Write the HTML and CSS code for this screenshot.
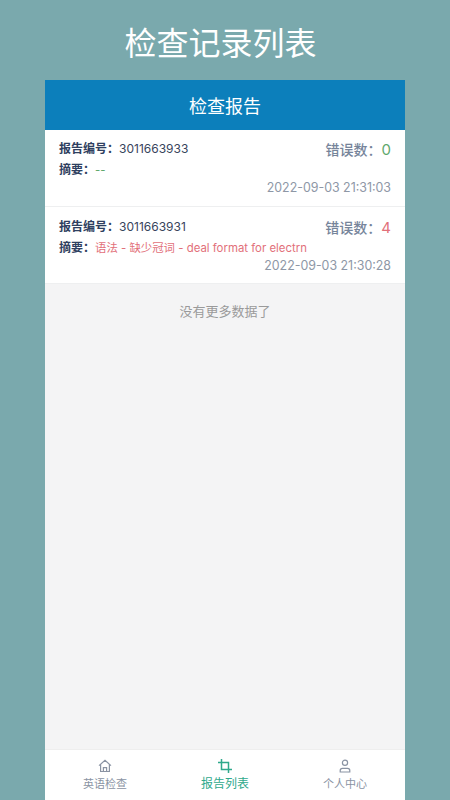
FILE: index.html
```html
<!DOCTYPE html>
<html lang="zh-CN">
<head>
  <meta charset="UTF-8">
  <meta name="viewport" content="width=device-width, initial-scale=1.0">
  <title>检查记录列表</title>
  <link rel="stylesheet" href="styles.css">
</head>
<body>

<h1 class="page-title">检查记录列表</h1>

<div class="phone">
  <header class="nav-bar">检查报告</header>

  <div class="content">
    <div class="report">
      <div class="report-top">
        <div class="report-no"><span class="label">报告编号：</span>3011663933</div>
        <div class="errors">错误数：<span class="count ok">0</span></div>
      </div>
      <div class="summary"><span class="label">摘要：</span><span class="ok">--</span></div>
      <div class="time">2022-09-03 21:31:03</div>
    </div>

    <div class="report">
      <div class="report-top">
        <div class="report-no"><span class="label">报告编号：</span>3011663931</div>
        <div class="errors">错误数：<span class="count bad">4</span></div>
      </div>
      <div class="summary"><span class="label">摘要：</span><span class="bad">语法 - 缺少冠词 - deal format for electrn</span></div>
      <div class="time">2022-09-03 21:30:28</div>
    </div>

    <p class="no-more">没有更多数据了</p>
  </div>

  <nav class="tabbar">
    <div class="tab">
      <svg viewBox="0 0 16 16" width="16" height="16" fill="none" stroke="currentColor" stroke-width="1.2"><path d="M2 7.6 8 2.4l6 5.2M3.6 6.6v6.9h8.8V6.6M6.4 13.5V9.6h3.2v3.9"/></svg>
      <span>英语检查</span>
    </div>
    <div class="tab active">
      <svg viewBox="0 0 16 16" width="16" height="16" fill="none" stroke="currentColor" stroke-width="1.5"><path d="M4.5 1v10.5H15M1 4.5h10.5V15"/></svg>
      <span>报告列表</span>
    </div>
    <div class="tab">
      <svg viewBox="0 0 16 16" width="16" height="16" fill="none" stroke="currentColor" stroke-width="1.2"><circle cx="8" cy="4.8" r="2.6"/><path d="M3.2 14v-1.4c0-1.3 1-2.2 2.2-2.2h5.2c1.2 0 2.2.9 2.2 2.2V14z"/></svg>
      <span>个人中心</span>
    </div>
  </nav>
</div>

</body>
</html>
```

FILE: styles.css
```css
body {
  margin: 0;
  height: 800px;
  overflow: hidden;
  background-color: #7aa9ad;
  font-family: "Noto Sans CJK SC", Inter, sans-serif;
  display: flex;
  flex-direction: column;
  align-items: center;
}

.page-title {
  margin: 0;
  padding-right: 9px;
  height: 80px;
  line-height: 82px;
  font-size: 32px;
  font-weight: 400;
  color: #fff;
}

.phone {
  width: 360px;
  height: 720px;
  display: flex;
  flex-direction: column;
  background-color: #f4f4f5;
}

.nav-bar {
  height: 50px;
  line-height: 50px;
  flex-shrink: 0;
  background-color: #0c7fbb;
  color: #fff;
  font-size: 18px;
  text-align: center;
}

.content {
  flex: 1;
}

.report {
  box-sizing: border-box;
  height: 77px;
  padding: 10px 14px 0;
  background-color: #fff;
  border-bottom: 1px solid #eeeff0;
  font-family: Inter, "Noto Sans CJK SC", sans-serif;
}

.report + .report {
  padding-top: 11px;
}

.report-top {
  display: flex;
  justify-content: space-between;
  align-items: flex-start;
  height: 21px;
}

.report-no {
  font-size: 12px;
  line-height: 18px;
  color: #37445c;
}

.label {
  font-size: 12px;
  font-weight: 700;
  color: #2f4060;
}

.errors {
  font-size: 14px;
  line-height: 20px;
  font-weight: 500;
  color: #76849a;
}

.count {
  font-size: 15px;
  font-weight: 400;
}

.ok { color: #5fa86c; }
.bad { color: #e2707a; }

.summary {
  font-size: 11.4px;
  line-height: 18px;
}

.time {
  margin-top: 1px;
  font-size: 12.4px;
  line-height: 16px;
  text-align: right;
  color: #8e97a6;
}

.no-more {
  margin: 0;
  padding-top: 17px;
  font-size: 13px;
  line-height: 20px;
  text-align: center;
  color: #9a9a9a;
}

.tabbar {
  height: 50px;
  flex-shrink: 0;
  display: flex;
  background-color: #fff;
  border-top: 1px solid #eeeeee;
}

.tab {
  flex: 1;
  display: flex;
  flex-direction: column;
  align-items: center;
  padding-top: 8px;
  font-size: 11px;
  line-height: 16px;
  color: #8a93a3;
}

.tab svg {
  display: block;
  margin-bottom: 1px;
}

.tab.active {
  color: #2fa98c;
  font-size: 12px;
}
```
